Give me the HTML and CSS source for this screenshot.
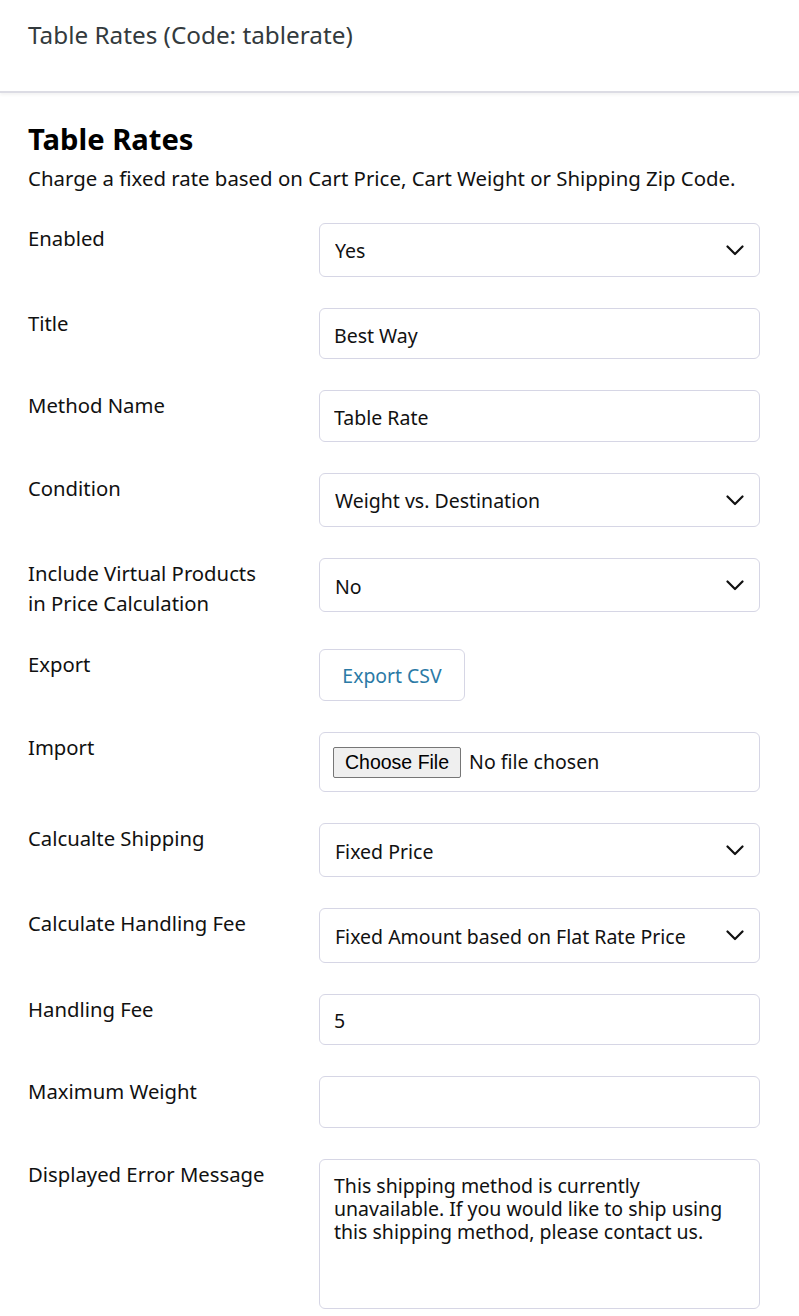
FILE: index.html
```html
<!DOCTYPE html>
<html lang="en">
<head>
<meta charset="utf-8">
<title>Table Rates</title>
<link rel="stylesheet" href="styles.css">
</head>
<body>
<header class="topbar">
  <div class="topbar-title">Table Rates (Code: tablerate)</div>
</header>
<main class="content">
  <h1 class="heading">Table Rates</h1>
  <p class="desc">Charge a fixed rate based on Cart Price, Cart Weight or Shipping Zip Code.</p>
  <form class="form">
    <div class="row">
      <label class="label">Enabled</label>
      <div class="select-wrap">
        <select class="control select"><option>Yes</option><option>No</option></select>
        <svg class="chev" width="18" height="11" viewBox="0 0 18 11"><path d="M1.5 1.5 L9 9 L16.5 1.5" fill="none" stroke="#111" stroke-width="2.2" stroke-linecap="round" stroke-linejoin="round"/></svg>
      </div>
    </div>
    <div class="row">
      <label class="label">Title</label>
      <input class="control input" type="text" value="Best Way">
    </div>
    <div class="row">
      <label class="label">Method Name</label>
      <input class="control input" type="text" value="Table Rate">
    </div>
    <div class="row">
      <label class="label">Condition</label>
      <div class="select-wrap">
        <select class="control select"><option>Weight vs. Destination</option></select>
        <svg class="chev" width="18" height="11" viewBox="0 0 18 11"><path d="M1.5 1.5 L9 9 L16.5 1.5" fill="none" stroke="#111" stroke-width="2.2" stroke-linecap="round" stroke-linejoin="round"/></svg>
      </div>
    </div>
    <div class="row">
      <label class="label">Include Virtual Products<br>in Price Calculation</label>
      <div class="select-wrap">
        <select class="control select"><option>No</option></select>
        <svg class="chev" width="18" height="11" viewBox="0 0 18 11"><path d="M1.5 1.5 L9 9 L16.5 1.5" fill="none" stroke="#111" stroke-width="2.2" stroke-linecap="round" stroke-linejoin="round"/></svg>
      </div>
    </div>
    <div class="row">
      <label class="label">Export</label>
      <div><button type="button" class="btn">Export CSV</button></div>
    </div>
    <div class="row">
      <label class="label">Import</label>
      <div class="file-box"><input class="file" type="file"></div>
    </div>
    <div class="row">
      <label class="label">Calcualte Shipping</label>
      <div class="select-wrap">
        <select class="control select"><option>Fixed Price</option></select>
        <svg class="chev" width="18" height="11" viewBox="0 0 18 11"><path d="M1.5 1.5 L9 9 L16.5 1.5" fill="none" stroke="#111" stroke-width="2.2" stroke-linecap="round" stroke-linejoin="round"/></svg>
      </div>
    </div>
    <div class="row">
      <label class="label">Calculate Handling Fee</label>
      <div class="select-wrap">
        <select class="control select"><option>Fixed Amount based on Flat Rate Price</option></select>
        <svg class="chev" width="18" height="11" viewBox="0 0 18 11"><path d="M1.5 1.5 L9 9 L16.5 1.5" fill="none" stroke="#111" stroke-width="2.2" stroke-linecap="round" stroke-linejoin="round"/></svg>
      </div>
    </div>
    <div class="row">
      <label class="label">Handling Fee</label>
      <input class="control input" type="text" value="5">
    </div>
    <div class="row">
      <label class="label">Maximum Weight</label>
      <input class="control input" type="text" value="">
    </div>
    <div class="row">
      <label class="label">Displayed Error Message</label>
      <textarea class="control textarea">This shipping method is currently unavailable. If you would like to ship using this shipping method, please contact us.</textarea>
    </div>
  </form>
</main>
</body>
</html>
```

FILE: styles.css
```css
* { box-sizing: border-box; }
html, body { margin: 0; padding: 0; background: #fff; }
body {
  font-family: "Noto Sans", "Open Sans", sans-serif;
  color: #111;
  width: 799px;
}
.topbar {
  height: 93px;
  border-bottom: 2px solid #dcdce4;
  box-shadow: 0 2px 3px rgba(0, 0, 0, 0.05);
  padding: 21px 28px 0;
}
.topbar-title {
  font-size: 24.3px;
  line-height: 28px;
  color: #333a3d;
}
.content {
  padding: 28px 39px 20px 28px;
}
.heading {
  margin: 0;
  font-size: 29.2px;
  line-height: 36px;
  font-weight: 700;
  color: #000;
}
.desc {
  margin: 8px 0 0;
  font-size: 20.4px;
  line-height: 26px;
  color: #111;
}
.form {
  margin-top: 31.5px;
  display: flex;
  flex-direction: column;
  gap: 31px;
}
.row {
  display: grid;
  grid-template-columns: 291px 441px;
  align-items: start;
}
.label {
  font-size: 20.3px;
  line-height: 29.5px;
  color: #111;
  padding-top: 1px;
}
.control {
  width: 100%;
  font-family: "Noto Sans", "Open Sans", sans-serif;
  font-size: 19.5px;
  color: #111;
  background: #fff;
  border: 1px solid #d6d6e5;
  border-radius: 6px;
  outline: none;
  margin: 0;
}
.input {
  height: 51.5px;
  padding: 3px 14px 0;
}
.select-wrap {
  position: relative;
}
.select {
  height: 54.3px;
  padding: 2px 40px 0 15px;
  appearance: none;
  -webkit-appearance: none;
}
.chev {
  position: absolute;
  right: 16px;
  top: 22px;
  pointer-events: none;
}
.btn {
  height: 52px;
  width: 146px;
  background: #fff;
  border: 1px solid #d6d6e5;
  border-radius: 6px;
  color: #2b7aa6;
  font-family: "Noto Sans", "Open Sans", sans-serif;
  font-size: 19.4px;
  padding: 0;
}
.file-box {
  height: 60px;
  border: 1px solid #d6d6e5;
  border-radius: 6px;
  padding: 14px 13px 0;
}
.file {
  font-family: "Noto Sans", "Open Sans", sans-serif;
  font-size: 19.5px;
  color: #111;
}
.file::file-selector-button {
  font-family: "Liberation Sans", Arial, sans-serif;
  font-size: 19.5px;
  height: 31px;
  padding: 0 11px;
  margin-right: 8px;
  background: #efefef;
  border: 1px solid #767676;
  border-radius: 2px;
  color: #000;
}
.textarea {
  height: 150px;
  padding: 14px 14px;
  line-height: 23px;
  resize: none;
  display: block;
}
```
